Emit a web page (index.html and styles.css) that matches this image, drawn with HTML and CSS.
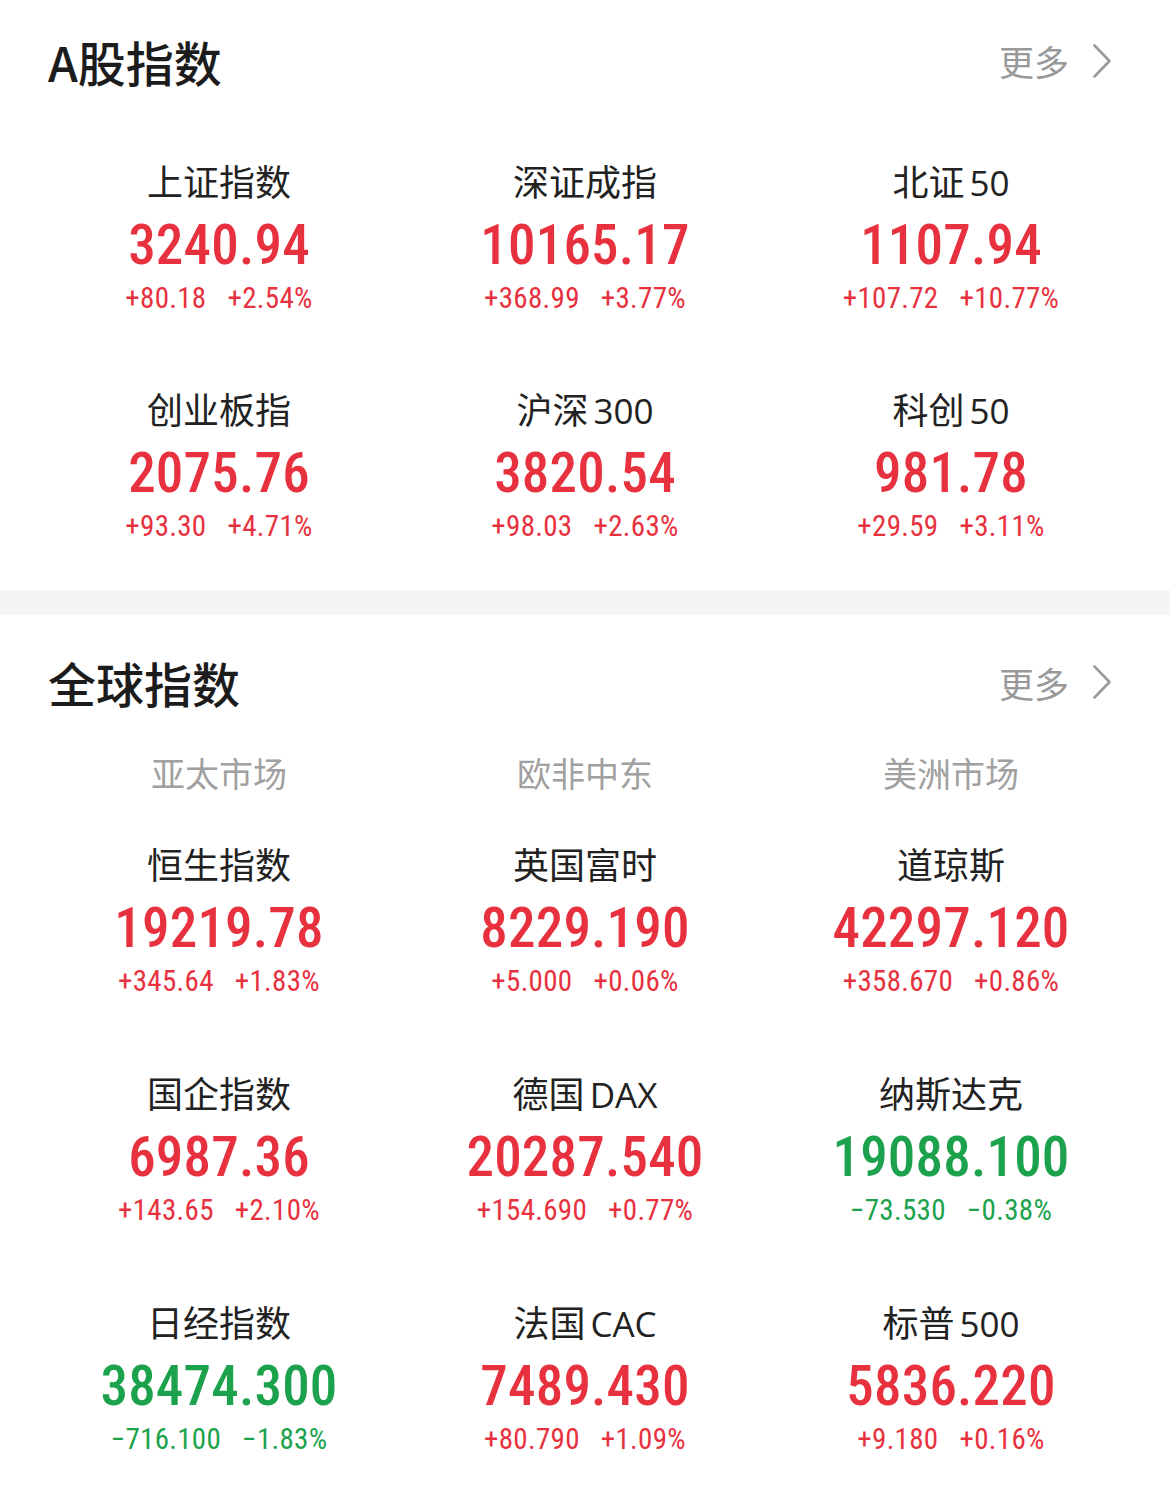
FILE: index.html
```html
<!DOCTYPE html>
<html lang="zh-CN">
<head>
<meta charset="utf-8">
<title>指数</title>
<link rel="stylesheet" href="styles.css">
</head>
<body>
<section class="panel panel-a">
  <header class="panel-head">
    <h2 class="panel-title">A股指数</h2>
    <a class="more">更多<svg class="chev" viewBox="0 0 20 36" width="20" height="36"><path d="M2.5 2.5 L17.5 18 L2.5 33.5" fill="none" stroke="#9a9a9a" stroke-width="2.6" stroke-linecap="round" stroke-linejoin="round"/></svg></a>
  </header>
  <div class="grid grid-a">
    <div class="cell up"><div class="name">上证指数</div><div class="value">3240.94</div><div class="chg"><span>+80.18</span><span>+2.54%</span></div></div>
    <div class="cell up"><div class="name">深证成指</div><div class="value">10165.17</div><div class="chg"><span>+368.99</span><span>+3.77%</span></div></div>
    <div class="cell up"><div class="name">北证<span class="lat">50</span></div><div class="value">1107.94</div><div class="chg"><span>+107.72</span><span>+10.77%</span></div></div>
    <div class="cell up"><div class="name">创业板指</div><div class="value">2075.76</div><div class="chg"><span>+93.30</span><span>+4.71%</span></div></div>
    <div class="cell up"><div class="name">沪深<span class="lat">300</span></div><div class="value">3820.54</div><div class="chg"><span>+98.03</span><span>+2.63%</span></div></div>
    <div class="cell up"><div class="name">科创<span class="lat">50</span></div><div class="value">981.78</div><div class="chg"><span>+29.59</span><span>+3.11%</span></div></div>
  </div>
</section>
<div class="band"></div>
<section class="panel panel-b">
  <header class="panel-head panel-head-b">
    <h2 class="panel-title">全球指数</h2>
    <a class="more">更多<svg class="chev" viewBox="0 0 20 36" width="20" height="36"><path d="M2.5 2.5 L17.5 18 L2.5 33.5" fill="none" stroke="#9a9a9a" stroke-width="2.6" stroke-linecap="round" stroke-linejoin="round"/></svg></a>
  </header>
  <div class="markets">
    <div class="market">亚太市场</div>
    <div class="market">欧非中东</div>
    <div class="market">美洲市场</div>
  </div>
  <div class="grid grid-b">
    <div class="cell up"><div class="name">恒生指数</div><div class="value">19219.78</div><div class="chg"><span>+345.64</span><span>+1.83%</span></div></div>
    <div class="cell up"><div class="name">英国富时</div><div class="value">8229.190</div><div class="chg"><span>+5.000</span><span>+0.06%</span></div></div>
    <div class="cell up"><div class="name">道琼斯</div><div class="value">42297.120</div><div class="chg"><span>+358.670</span><span>+0.86%</span></div></div>
    <div class="cell up"><div class="name">国企指数</div><div class="value">6987.36</div><div class="chg"><span>+143.65</span><span>+2.10%</span></div></div>
    <div class="cell up"><div class="name">德国<span class="lat">DAX</span></div><div class="value">20287.540</div><div class="chg"><span>+154.690</span><span>+0.77%</span></div></div>
    <div class="cell down"><div class="name">纳斯达克</div><div class="value">19088.100</div><div class="chg"><span>−73.530</span><span>−0.38%</span></div></div>
    <div class="cell down"><div class="name">日经指数</div><div class="value">38474.300</div><div class="chg"><span>−716.100</span><span>−1.83%</span></div></div>
    <div class="cell up"><div class="name">法国<span class="lat">CAC</span></div><div class="value">7489.430</div><div class="chg"><span>+80.790</span><span>+1.09%</span></div></div>
    <div class="cell up"><div class="name">标普<span class="lat">500</span></div><div class="value">5836.220</div><div class="chg"><span>+9.180</span><span>+0.16%</span></div></div>
  </div>
</section>
<div class="watermark" aria-hidden="true"><i></i><i></i><i></i><i></i><i></i></div>
</body>
</html>
```

FILE: styles.css
```css
html, body {
  margin: 0;
  padding: 0;
  background: #ffffff;
}
body {
  position: relative;
  width: 1170px;
  font-family: "Noto Sans CJK SC", "Noto Sans", sans-serif;
  color: #222222;
}
.panel {
  background: #ffffff;
}
.panel-a {
  padding-bottom: 47px;
}
.panel-head {
  box-sizing: border-box;
  height: 128px;
  display: flex;
  align-items: center;
  justify-content: space-between;
  padding: 0 58px 7px 48px;
}
.panel-head-b {
  height: 140px;
  padding-bottom: 6px;
}
.panel-title {
  margin: 0;
  font-size: 48px;
  font-weight: 500;
  color: #1c1c1c;
  line-height: 1;
}
.more {
  display: flex;
  align-items: center;
  gap: 23px;
  font-size: 35px;
  color: #999999;
  line-height: 1;
}
.chev {
  display: block;
}
.band {
  height: 25px;
  background: #f5f5f5;
}
.markets {
  display: grid;
  grid-template-columns: repeat(3, 1fr);
  padding: 0 36px;
}
.market {
  text-align: center;
  font-size: 34px;
  line-height: 36px;
  color: #a0a0a0;
}
.grid {
  display: grid;
  grid-template-columns: repeat(3, 1fr);
  padding: 0 36px;
}
.grid-a {
  margin-top: 29px;
  row-gap: 70px;
}
.grid-b {
  margin-top: 49px;
  row-gap: 71px;
}
.cell {
  display: flex;
  flex-direction: column;
  align-items: center;
}
.name {
  height: 46px;
  font-size: 36px;
  line-height: 46px;
  font-weight: 400;
  color: #222222;
  white-space: nowrap;
}
.lat {
  font-family: "Open Sans", "Noto Sans", sans-serif;
  margin-left: 5px;
  font-size: 35px;
  line-height: 1;
}
.value {
  margin-top: 6px;
  height: 70px;
  font-family: "Roboto", "Liberation Sans", sans-serif;
  font-stretch: condensed;
  font-weight: 500;
  font-size: 55px;
  line-height: 72px;
  letter-spacing: 0.2px;
}
.chg {
  display: flex;
  gap: 21px;
  height: 36px;
  font-family: "Roboto", "Liberation Sans", sans-serif;
  font-stretch: condensed;
  font-size: 29px;
  line-height: 38px;
  font-weight: 400;
  letter-spacing: 0.3px;
}
.up .value, .up .chg {
  color: #e8313e;
}
.down .value, .down .chg {
  color: #1ca24c;
}
.watermark {
  position: absolute;
  left: 1025px;
  top: 1458px;
  width: 140px;
  height: 32px;
  display: flex;
  align-items: center;
  gap: 14px;
  filter: blur(3px);
  opacity: 0.5;
}
.watermark i {
  display: block;
  width: 12px;
  height: 24px;
  background: #d6d6d6;
}
```
